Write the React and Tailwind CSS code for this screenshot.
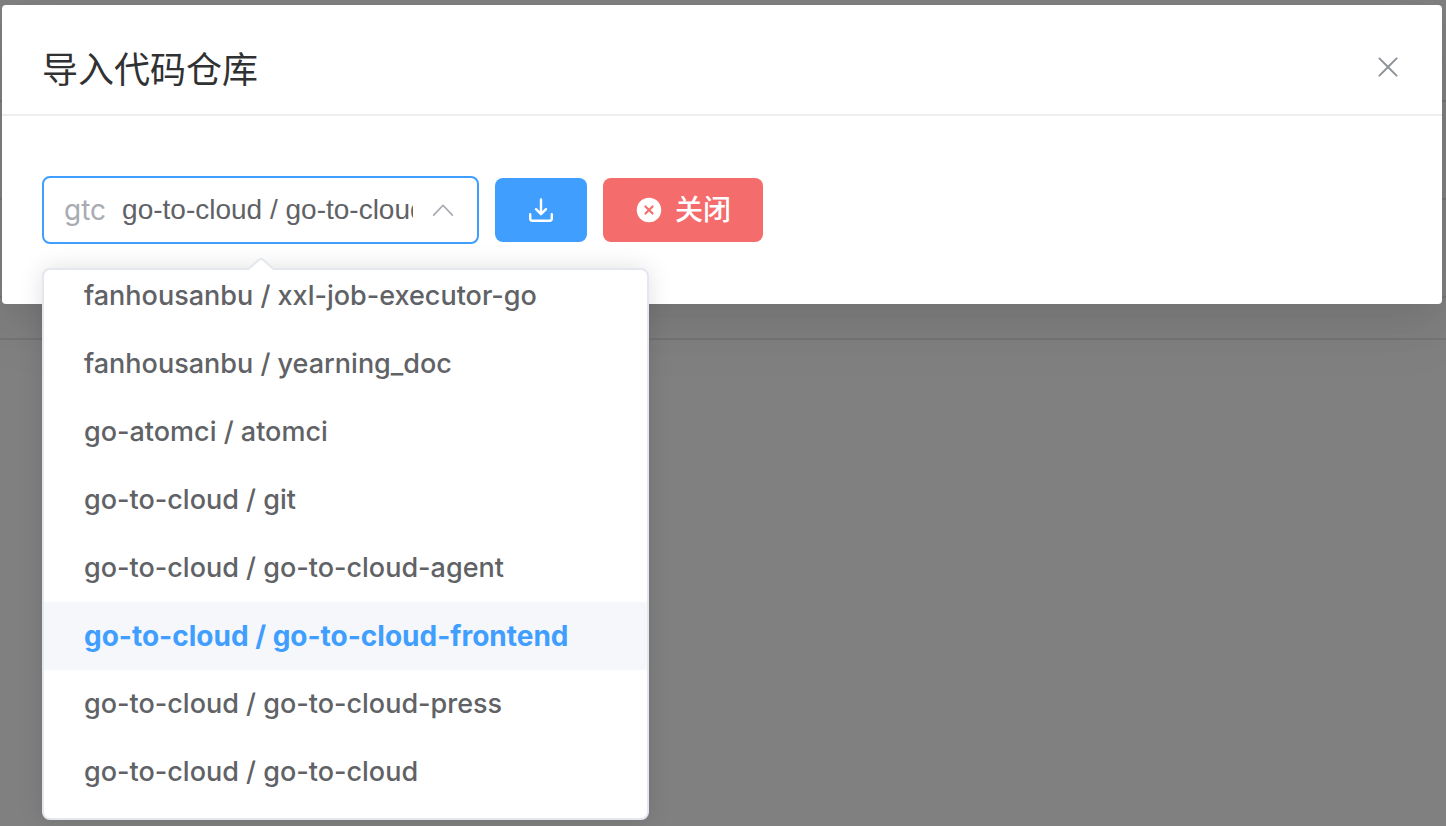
const options = [
  "fanhousanbu / xxl-job-executor-go",
  "fanhousanbu / yearning_doc",
  "go-atomci / atomci",
  "go-to-cloud / git",
  "go-to-cloud / go-to-cloud-agent",
  "go-to-cloud / go-to-cloud-frontend",
  "go-to-cloud / go-to-cloud-press",
  "go-to-cloud / go-to-cloud",
];
const selected = "go-to-cloud / go-to-cloud-frontend";

function CloseIcon() {
  return (
    <svg viewBox="0 0 1024 1024" className="size-8" fill="currentColor" aria-hidden="true">
      <path d="M764.288 214.592 512 466.88 259.712 214.592a31.936 31.936 0 0 0-45.12 45.12L466.752 512 214.528 764.224a31.936 31.936 0 1 0 45.12 45.184L512 557.184l252.288 252.288a31.936 31.936 0 0 0 45.12-45.12L557.12 512.064l252.288-252.352a31.936 31.936 0 1 0-45.12-45.184z" />
    </svg>
  );
}

function ArrowUpIcon() {
  return (
    <svg viewBox="0 0 1024 1024" className="size-7 shrink-0 text-[#a8abb2]" fill="currentColor" aria-hidden="true">
      <path d="m488.832 322.32-339.84 356.672a32 32 0 0 0 0 44.16l.384.384a29.44 29.44 0 0 0 42.688 0l320-335.872 319.872 335.872a29.44 29.44 0 0 0 42.688 0l.384-.384a32 32 0 0 0 0-44.16L535.168 322.32a32 32 0 0 0-46.336 0" />
    </svg>
  );
}

function DownloadIcon() {
  return (
    <svg viewBox="0 0 28 28" className="size-7" fill="none" stroke="currentColor" strokeWidth="2.4" strokeLinecap="round" strokeLinejoin="round" aria-hidden="true">
      <path d="M14 3.4v14.4M9 13.2l5 5 5-5" />
      <path d="M3.2 18.2v4.4a2.2 2.2 0 0 0 2.2 2.2h17.2a2.2 2.2 0 0 0 2.2-2.2v-4.4" />
    </svg>
  );
}

function CircleCloseIcon() {
  return (
    <svg viewBox="0 0 1024 1024" className="size-7" fill="currentColor" aria-hidden="true">
      <path d="M512 64a448 448 0 1 1 0 896 448 448 0 0 1 0-896m0 393.664L407.936 353.6a38.4 38.4 0 1 0-54.336 54.336L457.664 512 353.6 616.064a38.4 38.4 0 1 0 54.336 54.336L512 566.336 616.064 670.4a38.4 38.4 0 1 0 54.336-54.336L566.336 512 670.4 407.936a38.4 38.4 0 1 0-54.336-54.336z" />
    </svg>
  );
}

function RepoSelect() {
  return (
    <div className="relative">
      <div className="flex h-[68px] w-[437px] items-center rounded-lg border-2 border-[#409eff] bg-white pr-5 pl-5">
        <label htmlFor="repo" className="mr-4 font-['Inter',sans-serif] text-[28px] leading-8 text-[#a8abb2]">
          gtc
        </label>
        <input
          id="repo"
          role="combobox"
          aria-expanded="true"
          aria-controls="repo-options"
          readOnly
          defaultValue={selected}
          className="mr-4 min-w-0 flex-1 bg-transparent font-['Liberation_Sans',Arial,sans-serif] text-[28px] leading-8 text-[#606266] outline-none"
        />
        <ArrowUpIcon />
      </div>
      <div className="absolute top-full left-0 z-10 mt-6 w-[607px] rounded-lg border-2 border-[#e4e7ed] bg-white pb-3 shadow-[0_0_24px_rgba(0,0,0,0.12)]">
        <svg viewBox="0 0 28 14" className="absolute -top-3 left-[203px] h-3.5 w-7" aria-hidden="true">
          <path d="M1 12 12 1.6a3 3 0 0 1 4 0L27 12v2H1z" fill="#fff" />
          <path d="M1 11.4 12 1.8a3 3 0 0 1 4 0l11 9.6" fill="none" stroke="#e4e7ed" strokeWidth="2" />
        </svg>
        <ul id="repo-options" role="listbox" className="flex h-[536px] flex-col justify-end overflow-hidden rounded-md">
          {options.map((name) => (
            <li
              key={name}
              role="option"
              aria-selected={name === selected}
              className={
                name === selected
                  ? "h-[68px] shrink-0 bg-[#f5f7fa] px-10 text-[28px] leading-[68px] font-bold whitespace-nowrap text-[#409eff]"
                  : "h-[68px] shrink-0 px-10 text-[27px] leading-[68px] font-medium whitespace-nowrap text-[#606266]"
              }
            >
              {name}
            </li>
          ))}
        </ul>
      </div>
    </div>
  );
}

function BackdropRows() {
  return (
    <div className="absolute inset-x-0 top-0" aria-hidden="true">
      <div className="h-[102px] border-b-2 border-[#757578]" />
      <div className="h-[98px] border-b-2 border-[#757578]" />
      <div className="h-[98px] border-b-2 border-[#757578]" />
      <div className="h-[42px] border-b-2 border-[#757578]" />
    </div>
  );
}

export default function App() {
  return (
    <div className="relative min-h-screen overflow-hidden bg-[#808080] pt-[5px] pr-1 pl-0.5 font-['Inter','Noto_Sans_CJK_SC',sans-serif]">
      <BackdropRows />
      <section
        role="dialog"
        aria-labelledby="dialog-title"
        className="relative rounded bg-white shadow-[0_24px_64px_8px_rgba(0,0,0,0.04),0_16px_40px_rgba(0,0,0,0.08)]"
      >
        <header className="flex h-[111px] items-center justify-between border-b-2 border-[#eeeeee] pt-3.5 pr-[38px] pl-10">
          <h1 id="dialog-title" className="font-['Noto_Sans_CJK_SC',sans-serif] text-4xl text-[#303133]">
            导入代码仓库
          </h1>
          <button type="button" aria-label="关闭对话框" className="text-[#909399]">
            <CloseIcon />
          </button>
        </header>
        <div className="flex items-center gap-4 px-10 py-[60px]">
          <RepoSelect />
          <button type="button" aria-label="导入" className="flex h-16 items-center rounded-lg bg-[#409eff] px-8 text-white">
            <DownloadIcon />
          </button>
          <button type="button" className="flex h-16 items-center gap-3 rounded-lg bg-[#f56c6c] px-8 text-white">
            <CircleCloseIcon />
            <span className="pb-1 font-['Noto_Sans_CJK_SC',sans-serif] text-[28px] leading-8 font-medium">关闭</span>
          </button>
        </div>
      </section>
    </div>
  );
}
